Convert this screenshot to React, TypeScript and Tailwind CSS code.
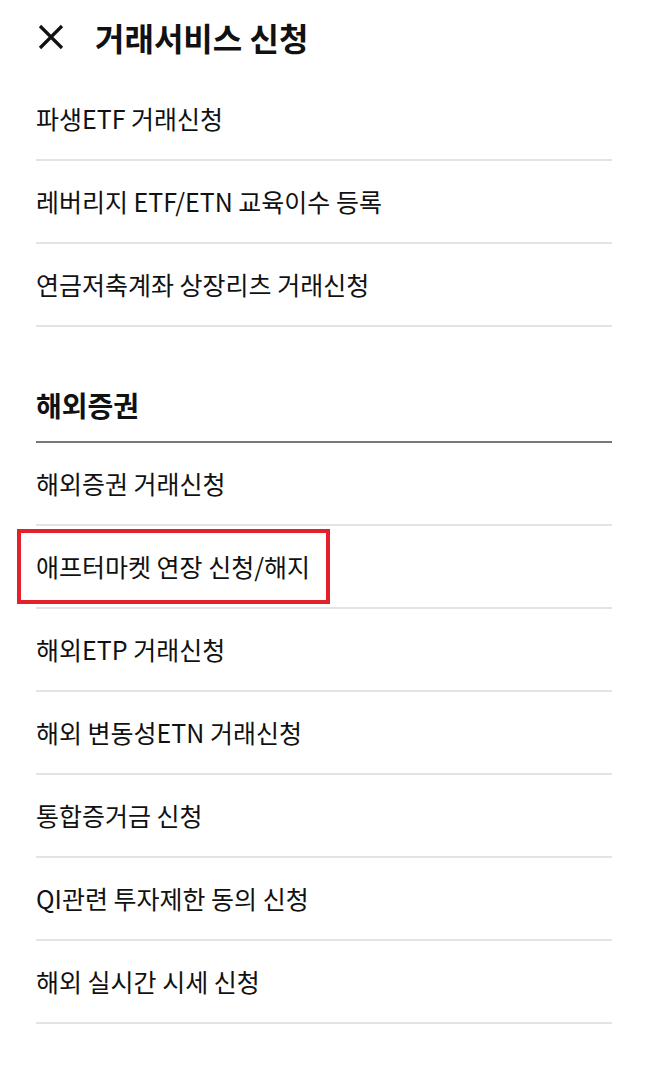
const TOP_ITEMS = ["파생ETF 거래신청", "레버리지 ETF/ETN 교육이수 등록", "연금저축계좌 상장리츠 거래신청"];

const OVERSEAS_ITEMS = [
  "해외증권 거래신청",
  "애프터마켓 연장 신청/해지",
  "해외ETP 거래신청",
  "해외 변동성ETN 거래신청",
  "통합증거금 신청",
  "QI관련 투자제한 동의 신청",
  "해외 실시간 시세 신청",
];

function MenuRow({ label }: { label: string }) {
  return (
    <div className="flex h-[83px] items-center border-b-2 border-[#e3e3e3] pb-[1px]">
      <span className="text-[25px] leading-none text-[#111]">{label}</span>
    </div>
  );
}

export default function App() {
  return (
    <div
      className="relative min-h-[1086px] w-full bg-white"
      style={{ fontFamily: '"Noto Sans CJK KR", "Noto Sans", sans-serif' }}
    >
      <header className="flex h-[78px] items-center pl-[36px] pb-[4px]">
        <svg width="30" height="30" viewBox="0 0 30 30">
          <path d="M4 4 L26 26 M26 4 L4 26" stroke="#111" strokeWidth="3.2" strokeLinecap="butt" />
        </svg>
        <h1 className="ml-[29px] text-[32px] font-bold leading-none text-[#111]">거래서비스 신청</h1>
      </header>

      <div className="px-[36px]">
        {TOP_ITEMS.map((item) => (
          <MenuRow key={item} label={item} />
        ))}

        <div className="flex h-[116px] items-end border-b-2 border-[#777] pb-[20px]">
          <h2 className="text-[28px] font-bold leading-[32px] text-[#111]">해외증권</h2>
        </div>

        {OVERSEAS_ITEMS.map((item) => (
          <MenuRow key={item} label={item} />
        ))}
      </div>

      {/* highlight box */}
      <div className="pointer-events-none absolute left-[17px] top-[529px] h-[75px] w-[313px] border-4 border-[#e3202b]" />
    </div>
  );
}
